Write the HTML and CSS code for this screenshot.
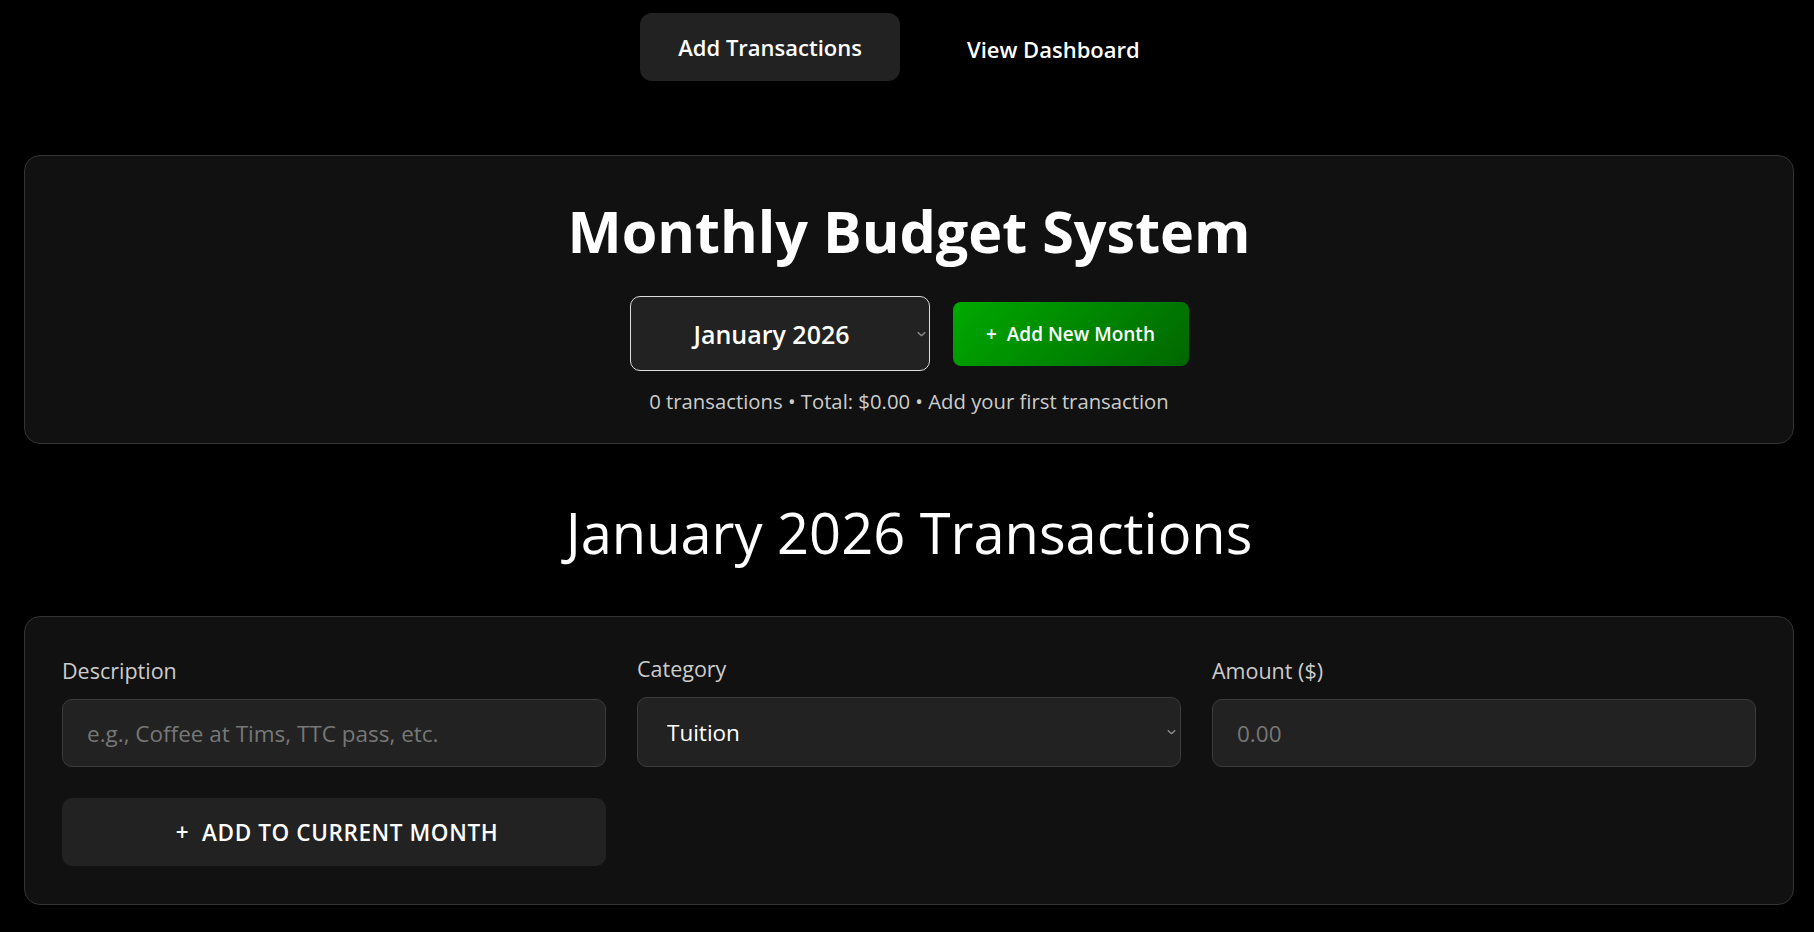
FILE: index.html
```html
<!DOCTYPE html>
<html lang="en">
<head>
    <meta charset="UTF-8">
    <meta name="viewport" content="width=device-width, initial-scale=1.0">
    <title>Monthly Budget System</title>
    <link rel="stylesheet" href="styles.css">
</head>
<body>
    <nav class="tabs">
        <button class="tab tab-active">Add Transactions</button>
        <button class="tab">View Dashboard</button>
    </nav>

    <main class="page">
        <section class="card header-card">
            <h1 class="title">Monthly Budget System</h1>
            <div class="month-row">
                <div class="select-wrap">
                    <select class="month-select">
                        <option>January 2026</option>
                    </select>
                    <svg class="chevron" width="9" height="5" viewBox="0 0 9 5"><path d="M0.8 0.8 L4.5 4.2 L8.2 0.8" fill="none" stroke="#8a8a8a" stroke-width="1.5"/></svg>
                </div>
                <button class="new-month-btn">+&nbsp; Add New Month</button>
            </div>
            <p class="month-summary">0 transactions • Total: $0.00 • Add your first transaction</p>
        </section>

        <h2 class="section-title">January 2026 Transactions</h2>

        <section class="card form-card">
            <form class="tx-form">
                <div class="field">
                    <label for="desc">Description</label>
                    <input id="desc" class="input" type="text" placeholder="e.g., Coffee at Tims, TTC pass, etc.">
                </div>
                <div class="field">
                    <label for="cat">Category</label>
                    <div class="select-wrap">
                        <select id="cat" class="input input-select">
                            <option>Tuition</option>
                            <option>Rent</option>
                            <option>Groceries</option>
                            <option>Transit</option>
                        </select>
                        <svg class="chevron chevron-field" width="9" height="5" viewBox="0 0 9 5"><path d="M0.8 0.8 L4.5 4.2 L8.2 0.8" fill="none" stroke="#8a8a8a" stroke-width="1.5"/></svg>
                    </div>
                </div>
                <div class="field">
                    <label for="amount">Amount ($)</label>
                    <input id="amount" class="input" type="text" placeholder="0.00">
                </div>
                <button type="button" class="add-btn">+&nbsp; ADD TO CURRENT MONTH</button>
            </form>
        </section>
    </main>
</body>
</html>
```

FILE: styles.css
```css
* {
    box-sizing: border-box;
}

body {
    margin: 0;
    padding: 15px 20px 0 24px;
    background-color: #000;
    color: #fff;
    font-family: 'Open Sans', 'Noto Sans', sans-serif;
    color-scheme: dark;
}

.tabs {
    display: flex;
    justify-content: center;
    gap: 29px;
}

.tab {
    height: 68px;
    padding: 0 38px;
    border: none;
    border-radius: 12px;
    background: transparent;
    color: #fff;
    font-family: inherit;
    font-size: 22px;
    font-weight: 600;
    cursor: pointer;
}

.tab-active {
    background-color: #222;
    transform: translateY(-2px);
}

.card {
    background-color: #111;
    border: 1px solid #333;
    border-radius: 16px;
}

.header-card {
    margin-top: 72px;
    padding: 40px 38px 29px;
    text-align: center;
}

.title {
    margin: 0;
    font-size: 57.5px;
    line-height: 70px;
    font-weight: 700;
}

.month-row {
    display: flex;
    justify-content: center;
    align-items: center;
    gap: 23px;
    margin-top: 30px;
}

.select-wrap {
    position: relative;
}

.chevron {
    position: absolute;
    top: 50%;
    right: 4px;
    transform: translateY(-50%);
    pointer-events: none;
}

.chevron-field {
    right: 5px;
}

.month-select {
    display: block;
    width: 300px;
    height: 75px;
    padding: 0 30px 0 14px;
    appearance: none;
    background-color: #222;
    color: #fff;
    border: 1px solid #ddd;
    border-radius: 10px;
    font-family: inherit;
    font-size: 25px;
    font-weight: 600;
    text-align: center;
    text-align-last: center;
}

.new-month-btn {
    width: 236px;
    height: 64px;
    border: none;
    border-radius: 8px;
    background: linear-gradient(135deg, #00aa00, #006600);
    color: #fff;
    font-family: inherit;
    font-size: 19px;
    font-weight: 600;
    cursor: pointer;
}

.month-summary {
    margin: 17px 0 0;
    font-size: 20.3px;
    line-height: 26px;
    color: #ccc;
}

.section-title {
    margin: 54px 0 50px;
    text-align: center;
    font-size: 56px;
    line-height: 68px;
    font-weight: 400;
}

.form-card {
    padding: 38px 37px;
}

.tx-form {
    display: grid;
    grid-template-columns: repeat(3, 1fr);
    gap: 31px;
    align-items: end;
}

.field label {
    display: block;
    margin-bottom: 14px;
    font-size: 21.5px;
    line-height: 28px;
    color: #ccc;
}

.input {
    display: block;
    width: 100%;
    height: 68px;
    padding: 0 24px;
    background-color: #222;
    color: #fff;
    border: 1px solid #3c3c3c;
    border-radius: 10px;
    font-family: inherit;
    font-size: 22.5px;
    outline: none;
}

.input::placeholder {
    color: #777;
}

.input-select {
    height: 70px;
    padding-left: 29px;
    appearance: none;
}

.add-btn {
    height: 68px;
    padding-left: 12px;
    border: none;
    border-radius: 10px;
    background-color: #222;
    color: #fff;
    font-family: inherit;
    font-size: 22.5px;
    font-weight: 600;
    letter-spacing: 0.6px;
    cursor: pointer;
}
```
